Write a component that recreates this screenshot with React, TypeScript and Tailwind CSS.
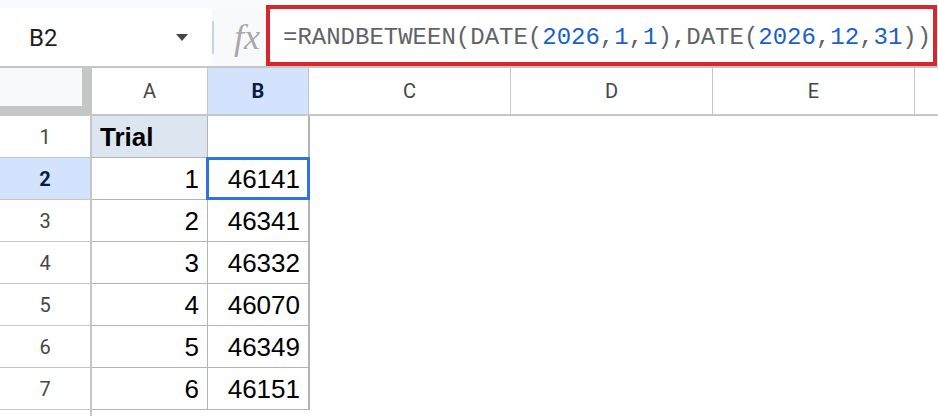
const trials = [
  { n: 1, value: 46141 },
  { n: 2, value: 46341 },
  { n: 3, value: 46332 },
  { n: 4, value: 46070 },
  { n: 5, value: 46349 },
  { n: 6, value: 46151 },
];

const wideCols = ['C', 'D', 'E'];

function Formula() {
  const num = 'text-[#1a5fd0]';
  return (
    <span className="whitespace-pre font-['Liberation_Mono',monospace] text-[24px] text-[#5f6368]">
      =RANDBETWEEN(DATE(<span className={num}>2026</span>,<span className={num}>1</span>,
      <span className={num}>1</span>),DATE(<span className={num}>2026</span>,
      <span className={num}>12</span>,<span className={num}>31</span>))
    </span>
  );
}

function TopBar() {
  return (
    <div className="flex h-[66px] bg-[#f9fbfd]">
      {/* name box */}
      <div className="mt-[9px] flex w-[212px] items-center bg-white pl-[29px] pr-[24px]">
        <span className="font-['Roboto',sans-serif] text-[24px] text-[#1f1f1f]">B2</span>
        <span className="ml-auto h-0 w-0 border-x-[6px] border-t-[7px] border-x-transparent border-t-[#444746]" />
      </div>
      <div className="mt-[9px] flex w-[54px] items-center bg-[#f8f9fa]">
        <div className="h-[33px] w-[2px] bg-[#c5d4ea]" />
        <span className="ml-[20px] -mt-[2px] font-['Liberation_Serif',serif] text-[36px] italic leading-none text-[#a9a9a9]">
          fx
        </span>
      </div>
      <div className="mt-[5px] mr-[1px] flex flex-1 items-center border-[4px] border-[#d9262c] bg-white pl-[13px] pt-[4px]">
        <Formula />
      </div>
    </div>
  );
}

function HeaderRow() {
  return (
    <div className="flex h-[50px] border-y-2 border-[#c4c7c5] font-['Roboto',sans-serif] text-[20px] text-[#444746]">
      <div className="w-[92px] bg-[#c4c7c5]">
        <div className="h-[38px] w-[82px] bg-[#f8f9fa]" />
      </div>
      <div className="flex w-[116px] items-center justify-center border-r border-[#c4c7c5] bg-white">A</div>
      <div className="flex w-[101px] items-center justify-center border-r border-[#c4c7c5] bg-[#d3e3fd] font-bold text-[#041e49]">
        B
      </div>
      {wideCols.map((c) => (
        <div key={c} className="flex w-[202px] items-center justify-center border-r border-[#c4c7c5] bg-white">
          {c}
        </div>
      ))}
      <div className="flex-1 bg-white" />
    </div>
  );
}

function RowHead({ n, active }: { n: number; active?: boolean }) {
  return (
    <div
      className={
        active
          ? 'flex w-[92px] items-center justify-center border-r-2 border-b border-[#c4c7c5] bg-[#d3e3fd] font-bold text-[#041e49]'
          : 'flex w-[92px] items-center justify-center border-r-2 border-b border-[#c4c7c5] bg-white text-[#444746]'
      }
    >
      <span className="font-['Roboto',sans-serif] text-[20px]">{n}</span>
    </div>
  );
}

export default function App() {
  return (
    <div className="h-[416px] w-[938px] overflow-hidden bg-white">
      <TopBar />
      <HeaderRow />

      {/* row 1 */}
      <div className="flex h-[42px]">
        <RowHead n={1} />
        <div className="flex w-[116px] items-center border-r border-b border-[#b3b3b3] bg-[#dde6f0] pl-[8px] pt-[2px] font-['Liberation_Sans',Arial,sans-serif] text-[26px] font-bold text-black">
          Trial
        </div>
        <div className="w-[102px] border-r-2 border-b border-[#b3b3b3]" />
      </div>

      {trials.map((t, i) => (
        <div key={t.n} className="flex h-[42px] font-['Liberation_Sans',Arial,sans-serif] text-[26px] text-black">
          <RowHead n={i + 2} active={i === 0} />
          <div className="flex w-[116px] items-center justify-end border-r border-b border-[#b3b3b3] pr-[8px] pt-[2px]">
            {t.n}
          </div>
          <div className="relative flex w-[102px] items-center justify-end border-r-2 border-b border-[#b3b3b3] pr-[8px] pt-[2px]">
            {t.value}
            {i === 0 && (
              <div className="absolute -top-[1px] -left-[2px] -right-[2px] -bottom-[1px] border-[3px] border-[#2f72e4]" />
            )}
          </div>
        </div>
      ))}

      {/* row 8, cut off */}
      <div className="flex h-[42px]">
        <div className="w-[92px] border-r-2 border-[#c4c7c5]" />
      </div>
    </div>
  );
}
